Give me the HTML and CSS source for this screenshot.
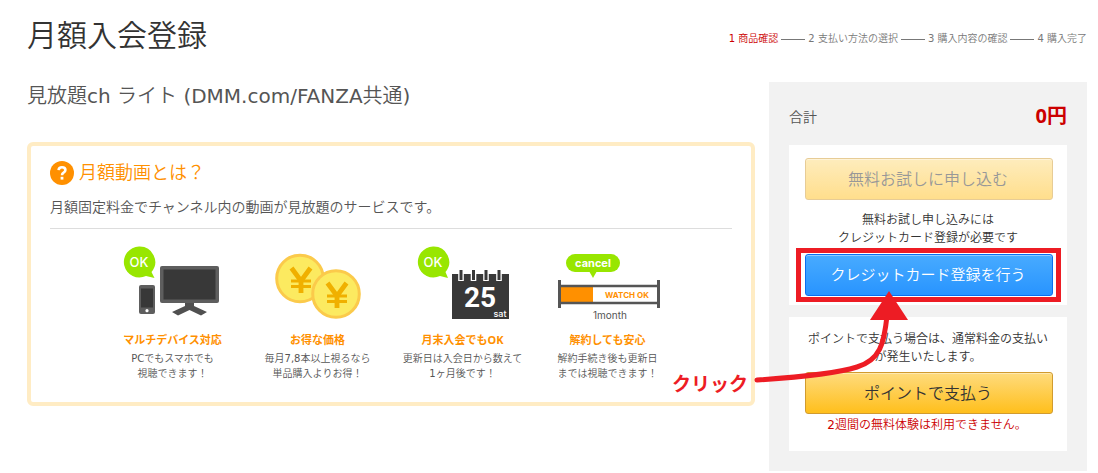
FILE: index.html
```html
<!DOCTYPE html>
<html lang="ja">
<head>
  <meta charset="UTF-8" />
  <meta name="viewport" content="width=device-width, initial-scale=1.0" />
  <title>月額入会登録</title>
  <link rel="stylesheet" href="styles.css">
</head>
<body>
  <header class="header">
    <h1>月額入会登録</h1>
    <ol class="steps">
      <li class="current">1 商品確認</li>
      <li>2 支払い方法の選択</li>
      <li>3 購入内容の確認</li>
      <li>4 購入完了</li>
    </ol>
  </header>

  <div class="layout">
    <main class="main">
      <h2>見放題ch ライト (DMM.com/FANZA共通)</h2>

      <section class="about">
        <h3>
          <svg width="24" height="24" viewBox="0 0 24 24" aria-hidden="true">
            <circle cx="12" cy="12" r="12" fill="#ff9000" />
            <path d="M8.6 9.2 Q8.8 6.2 12 6.2 Q15.4 6.2 15.4 9 Q15.4 10.6 13.6 11.6 Q12 12.5 12 14.2" fill="none" stroke="#fff" stroke-width="2.6" />
            <rect x="10.6" y="15.8" width="2.8" height="2.8" fill="#fff" />
          </svg>
          <span>月額動画とは？</span>
        </h3>
        <p class="lead">月額固定料金でチャンネル内の動画が見放題のサービスです。</p>

        <ul class="features">
          <li>
            <svg width="130" height="80" viewBox="0 0 130 80" aria-hidden="true">
              <path d="M31 3.5 A15.5 15.5 0 1 0 38 33 L46.5 35 L43.5 29 A15.5 15.5 0 0 0 31 3.5 Z" fill="#98e600" />
              <text class="ok" x="31" y="24">OK</text>
              <rect x="52" y="23" width="59" height="37" rx="2" fill="#5e5e5e" />
              <rect x="55.5" y="26.5" width="52" height="30" fill="#383838" />
              <path d="M77 60 H86 V63 L99 69 L93 72.5 L81.5 67 L70 72.5 L64 69 L77 63 Z" fill="#505050" />
              <rect x="31" y="42" width="16" height="29" rx="2" fill="#5e5e5e" />
              <rect x="33" y="45.5" width="12" height="19" fill="#383838" />
              <circle cx="39" cy="67.7" r="1.6" fill="#fff" />
            </svg>
            <h4>マルチデバイス対応</h4>
            <p>PCでもスマホでも<br>視聴できます！</p>
          </li>
          <li>
            <svg width="130" height="80" viewBox="0 0 130 80" aria-hidden="true">
              <g fill="#fcea60" stroke="#fbca4b" stroke-width="3">
                <circle cx="47" cy="35.5" r="23.3" />
                <circle cx="83" cy="51" r="23.3" />
              </g>
              <g fill="none" stroke="#f0b000" stroke-width="4.8">
                <path d="M38.5 25 L48 38 L57.5 25 M48 37 V50" />
                <path d="M38 38 H58 M38 43.5 H58" stroke-width="3" />
                <path d="M74.5 40 L84 53 L93.5 40 M84 52 V65" />
                <path d="M74 53 H94 M74 58.5 H94" stroke-width="3" />
              </g>
            </svg>
            <h4>お得な価格</h4>
            <p>毎月7,8本以上視るなら<br>単品購入よりお得！</p>
          </li>
          <li>
            <svg width="130" height="80" viewBox="0 0 130 80" aria-hidden="true">
              <path d="M35 3.5 A15.5 15.5 0 1 0 42 33 L50 35 L47.5 29 A15.5 15.5 0 0 0 35 3.5 Z" fill="#98e600" />
              <text class="ok" x="35" y="24">OK</text>
              <rect x="54" y="31" width="57" height="45" fill="#383838" />
              <path d="M63 26 V38 M75.5 26 V38 M88 26 V38 M101 26 V38" stroke="#fff" stroke-width="5.6" />
              <path d="M63 27 V37 M75.5 27 V37 M88 27 V37 M101 27 V37" stroke="#383838" stroke-width="3" />
              <text class="day" x="82" y="64">25</text>
              <text class="weekday" x="102" y="74">sat</text>
            </svg>
            <h4>月末入会でもOK</h4>
            <p>更新日は入会日から数えて<br>1ヶ月後です！</p>
          </li>
          <li>
            <svg width="130" height="80" viewBox="0 0 130 80" aria-hidden="true">
              <rect x="23" y="11" width="54" height="18" rx="9" fill="#98e600" />
              <path d="M46 28 H54 L50 35 Z" fill="#98e600" />
              <text class="cancel" x="50" y="24">cancel</text>
              <rect x="18" y="43" width="32" height="17" fill="#ff9000" />
              <path d="M16.5 37 V65 M115.5 37 V65" stroke="#555" stroke-width="3" />
              <path d="M17 43 H115 M17 60 H115" stroke="#555" stroke-width="2.4" />
              <text class="watch" x="84" y="55">WATCH OK</text>
              <text class="month" x="67" y="76">1month</text>
            </svg>
            <h4>解約しても安心</h4>
            <p>解約手続き後も更新日<br>までは視聴できます！</p>
          </li>
        </ul>
      </section>
    </main>

    <aside class="sidebar">
      <div class="total">
        <span>合計</span>
        <strong>0円</strong>
      </div>

      <div class="box">
        <button type="button" class="btn btn-yellow" disabled>無料お試しに申し込む</button>
        <p class="note">無料お試し申し込みには<br>クレジットカード登録が必要です</p>
        <div class="target">
          <button type="button" class="btn btn-blue">クレジットカード登録を行う</button>
        </div>
      </div>

      <div class="box box-point">
        <p class="note">ポイントで支払う場合は、通常料金の支払いが発生いたします。</p>
        <button type="button" class="btn btn-yellow">ポイントで支払う</button>
        <p class="warning">2週間の無料体験は利用できません。</p>
      </div>

      <span class="click">クリック</span>
      <svg class="arrow" width="160" height="100" viewBox="0 0 160 100" aria-hidden="true">
        <path d="M3 89 C50 86 84 82 103 76 C126 69 130 53 133 25" fill="none" stroke="#ed1c24" stroke-width="5" stroke-linecap="round" />
        <path d="M135 0 L154 29 H116 Z" fill="#ed1c24" />
      </svg>
    </aside>
  </div>
</body>
</html>
```

FILE: styles.css
```css
* {
  box-sizing: border-box;
}
body {
  margin: 0;
  padding: 16px 11px 0 27px;
  font-family: "DejaVu Sans", "Noto Sans CJK JP DemiLight", "Noto Sans CJK JP", sans-serif;
  color: #333;
  background: #fff;
}
h1, h2, h3, h4, p, ol, ul {
  margin: 0;
  padding: 0;
  font-weight: normal;
  list-style: none;
}
.header {
  display: flex;
  justify-content: space-between;
  align-items: center;
  height: 40px;
}
h1 {
  font-size: 30px;
  line-height: 40px;
}
.steps {
  display: flex;
  gap: 3px;
  padding-top: 6px;
  font-size: 10px;
  line-height: 16px;
  color: #777;
}
.steps li {
  display: flex;
  align-items: center;
  gap: 3px;
}
.steps li + li::before {
  content: "";
  width: 24px;
  height: 1px;
  background: #777;
}
.steps .current {
  color: #c00;
}
.layout {
  display: flex;
  align-items: flex-start;
  gap: 14px;
  padding-top: 26px;
}
.main {
  flex: 1;
}
h2 {
  font-size: 20px;
  line-height: 28px;
  color: #555;
}
.about {
  margin-top: 32px;
  padding: 14px 19px 21px;
  border: 4px solid #ffecc4;
  border-radius: 6px;
}
h3 {
  display: flex;
  align-items: center;
  gap: 5px;
  font-size: 18px;
  line-height: 26px;
  color: #ff9000;
}
.lead {
  padding: 10px 0;
  border-bottom: 1px solid #ddd;
  font-size: 14px;
  line-height: 22px;
  color: #555;
}
.features {
  display: flex;
  justify-content: center;
  padding: 14px 2px 0 0;
}
.features li {
  width: 145px;
  text-align: center;
}
.features svg {
  display: block;
  margin: 0 auto;
}
.features h4 {
  padding: 9px 0 3px;
  font-size: 11px;
  line-height: 16px;
  color: #ff9000;
}
.features p {
  font-size: 10px;
  line-height: 15px;
  color: #555;
}
.features text {
  font-family: Inter, sans-serif;
  text-anchor: middle;
}
.ok {
  font-size: 13px;
  font-weight: 500;
  fill: #fff;
}
.features .day {
  font-family: Roboto, sans-serif;
  font-size: 28px;
  font-weight: bold;
  fill: #fff;
}
.weekday {
  font-size: 9px;
  font-weight: 500;
  fill: #fff;
}
.cancel {
  font-size: 11px;
  font-weight: bold;
  fill: #fff;
}
.watch {
  font-size: 8px;
  font-weight: bold;
  fill: #ff9000;
}
.month {
  font-size: 10px;
  fill: #555;
}
.sidebar {
  position: relative;
  width: 318px;
  padding: 20px;
  background: #f2f2f2;
}
.total {
  display: flex;
  justify-content: space-between;
  align-items: center;
  height: 28px;
  margin-bottom: 15px;
  font-size: 14px;
  color: #555;
}
.total strong {
  font-size: 20px;
  line-height: 28px;
  color: #c00;
}
.features h4, .total strong, .click {
  font-family: "Noto Sans", "Noto Sans CJK JP", sans-serif;
  font-weight: bold;
}
.box {
  padding: 13px 14px 9px 16px;
  background: #fff;
  text-align: center;
}
.box-point {
  margin-top: 12px;
  padding-bottom: 15px;
}
.btn {
  display: block;
  width: 100%;
  height: 42px;
  padding: 0 2px 3px 0;
  border: 1px solid #d19b2f;
  border-radius: 3px;
  font-family: inherit;
  font-size: 16px;
  color: #333;
  box-shadow: inset 0 1px 0 rgba(255, 255, 255, 0.4);
  cursor: pointer;
}
.btn-yellow {
  background: linear-gradient(#fedb7d, #ffbf1c);
}
.btn-yellow:disabled {
  opacity: 0.5;
  cursor: default;
}
.btn-blue {
  border-color: #0a6ef0;
  background: linear-gradient(#48abff, #2894ff);
  font-size: 15px;
  color: #fff;
}
.note {
  padding: 11px 2px 7px 0;
  font-size: 12px;
  line-height: 18px;
}
.box-point .note {
  padding: 0 2px 6px 0;
}
.warning {
  padding: 2px 4px 2px 0;
  font-size: 12px;
  line-height: 18px;
  color: #c00;
}
.target {
  position: relative;
}
/* red frame around the card button */
.target::after {
  content: "";
  position: absolute;
  inset: -6px -8px -6px -9px;
  border: 5px solid #ed1c24;
  pointer-events: none;
}
.click {
  position: absolute;
  top: 288px;
  left: -97px;
  font-size: 19px;
  line-height: 28px;
  color: #ed1c24;
}
.arrow {
  position: absolute;
  top: 209px;
  left: -15px;
  pointer-events: none;
}
```
